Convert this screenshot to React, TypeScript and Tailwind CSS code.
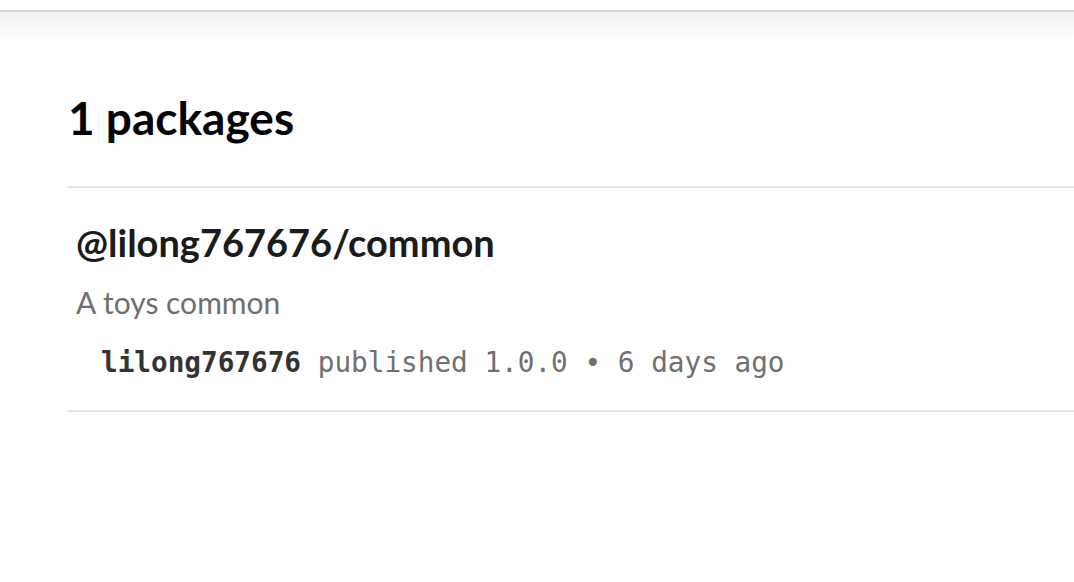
import React from "react";

type Pkg = {
  name: string;
  description: string;
  publisher: string;
  version: string;
  date: string;
};

const packages: Pkg[] = [
  {
    name: "@lilong767676/common",
    description: "A toys common",
    publisher: "lilong767676",
    version: "1.0.0",
    date: "6 days ago",
  },
];

const sans = "font-['Lato','Noto_Sans',sans-serif]";
const mono = "font-['DejaVu_Sans_Mono','Liberation_Mono',monospace]";

const PackageRow = ({ pkg }: { pkg: Pkg }) => (
  <section className="border-b-2 border-[#e5e5e5] pt-[30px] pb-[27px]">
    <h3 className={`${sans} pl-[8px] text-[38px] leading-[48px] font-bold text-[#1b1b1b]`}>
      {pkg.name}
    </h3>
    <p className={`${sans} mt-[16px] pl-[8px] text-[30px] leading-[40px] text-[#6f6f6f]`}>
      {pkg.description}
    </p>
    <div className={`${mono} mt-[21px] pl-[33px] text-[27.7px] leading-[40px] text-[#707070]`}>
      <span className="font-bold text-[#333]">{pkg.publisher}</span> published {pkg.version} • {pkg.date}
    </div>
  </section>
);

export default function App() {
  return (
    <div className="min-h-screen bg-white">
      <div className="h-[10px] bg-white" />
      <div className="h-[2px] bg-[#d4d4d4]" />
      <div className="h-[30px] bg-linear-to-b from-[#f1f1f1] to-white" />
      <main className="pl-[68px]">
        <h2 className={`${sans} pt-[44px] pb-[36px] text-[46px] leading-[64px] font-bold text-black`}>
          {packages.length} packages
        </h2>
        <div className="border-t-2 border-[#e5e5e5]">
          {packages.map((p) => (
            <PackageRow key={p.name} pkg={p} />
          ))}
        </div>
      </main>
    </div>
  );
}
